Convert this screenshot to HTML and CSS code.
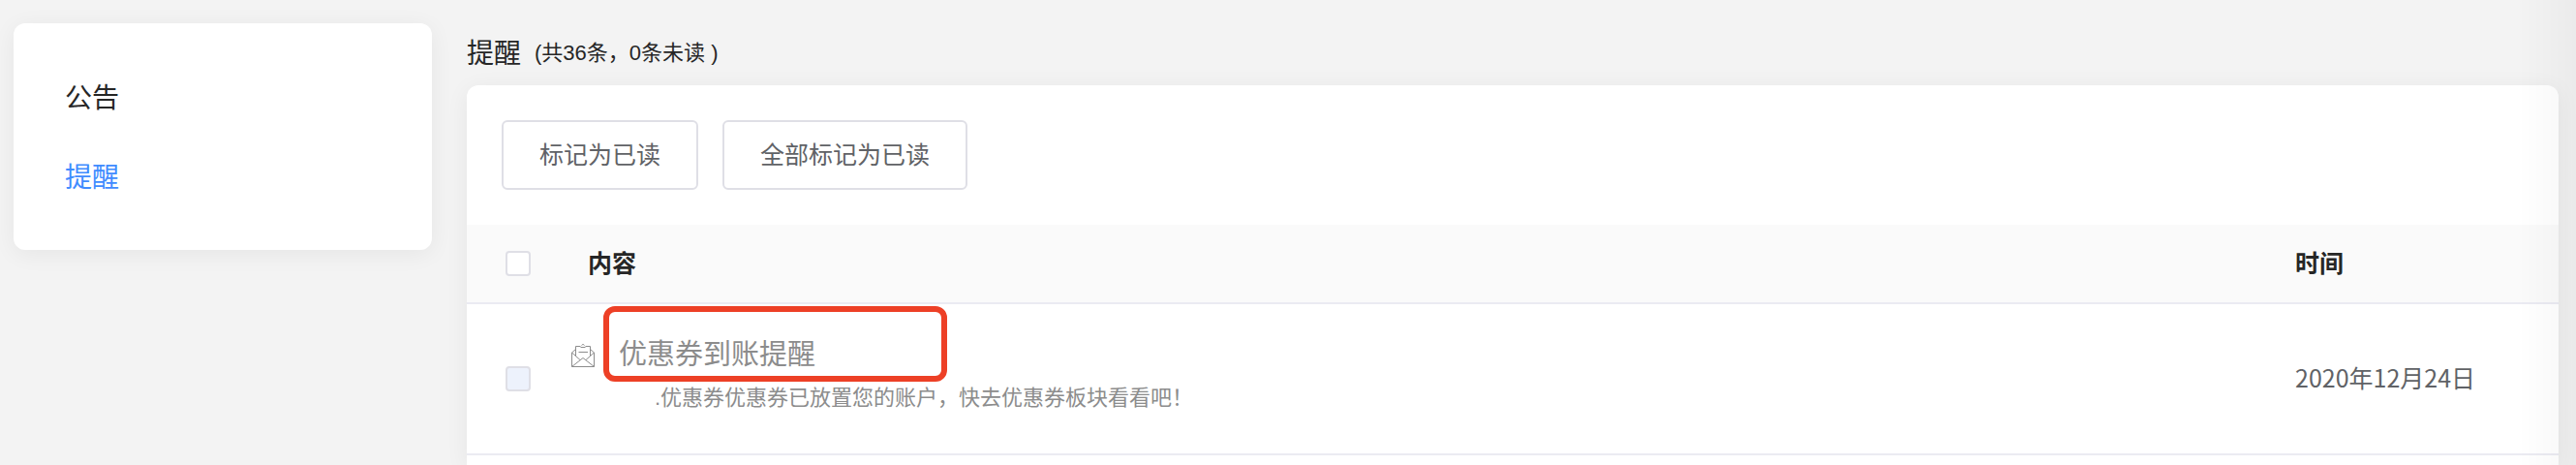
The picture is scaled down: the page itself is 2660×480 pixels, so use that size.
FILE: index.html
```html
<!DOCTYPE html>
<html lang="zh-CN">
<head>
    <meta charset="UTF-8">
    <meta name="viewport" content="width=device-width, initial-scale=1.0">
    <title>提醒</title>
    <link rel="stylesheet" href="styles.css">
</head>
<body>
    <div class="page">
        <nav class="sidebar">
            <a class="sidebar-link" href="#notice">公告</a>
            <a class="sidebar-link active" href="#remind">提醒</a>
        </nav>
        <main class="content">
            <header class="content-header">
                <h1 class="title">提醒</h1>
                <span class="count">(共36条，0条未读 )</span>
            </header>
            <section class="panel">
                <div class="toolbar">
                    <button class="btn" type="button">标记为已读</button>
                    <button class="btn" type="button">全部标记为已读</button>
                </div>
                <table class="message-table">
                    <thead>
                        <tr>
                            <th class="col-check"><input class="checkbox" type="checkbox" aria-label="全选"></th>
                            <th class="col-content">内容</th>
                            <th class="col-time">时间</th>
                        </tr>
                    </thead>
                    <tbody>
                        <tr>
                            <td class="col-check"><input class="checkbox" type="checkbox" aria-label="选择" disabled></td>
                            <td class="col-message">
                                <div class="message-head">
                                    <svg class="mail-icon" viewBox="0 0 24 24" fill="none" stroke="#8c8c8c">
                                        <path d="M4.5 12V2.5H9.5M14.5 2.5H19.5V12"/>
                                        <path d="M9.5 3.5H14.5M10.5 1.5C11 .3 13 .3 13.5 1.5"/>
                                        <path d="M7.5 8.5H17"/>
                                        <path d="M4.5 5.5L.5 9V23.5H23.5V9L19.5 5.5"/>
                                        <path d="M.5 9L9 16.5M23.5 9L15 16.5M.5 23.5L12 14.5L23.5 23.5"/>
                                    </svg>
                                    <span class="message-title">优惠券到账提醒</span>
                                </div>
                                <p class="message-text">.优惠券优惠券已放置您的账户，快去优惠券板块看看吧！</p>
                            </td>
                            <td class="col-time">2020年12月24日</td>
                        </tr>
                    </tbody>
                </table>
            </section>
        </main>
    </div>
</body>
</html>
```

FILE: styles.css
```css
* {
    box-sizing: border-box;
}
body {
    margin: 0;
    background-color: #f3f3f3;
    color: #262626;
    font-family: "Liberation Sans", "Noto Sans CJK SC", sans-serif;
    font-size: 25px;
}
/* soft shade along the right edge of the window */
body::after {
    content: "";
    position: fixed;
    top: 0;
    right: 0;
    bottom: 0;
    width: 60px;
    background: linear-gradient(to right, rgba(0, 0, 0, 0), rgba(0, 0, 0, 0.03));
    pointer-events: none;
}
.page {
    display: flex;
    gap: 36px;
    min-height: 100vh;
    padding: 24px 18px 0 14px;
}
.sidebar {
    display: flex;
    flex-direction: column;
    align-self: flex-start;
    gap: 42px;
    flex: 0 0 432px;
    padding: 58px 53px 54px;
    background-color: #fff;
    border-radius: 12px;
    box-shadow: 0 4px 24px rgba(0, 0, 0, 0.06);
}
.sidebar-link {
    color: #262626;
    font-size: 28px;
    line-height: 40px;
    text-decoration: none;
}
.sidebar-link.active {
    color: #3f8cff;
}
.content {
    display: flex;
    flex-direction: column;
    flex: 1;
    min-width: 0;
}
.content-header {
    display: flex;
    align-items: flex-start;
    gap: 14px;
    height: 64px;
    padding-top: 10px;
}
.title {
    margin: 0;
    font-size: 28px;
    font-weight: 400;
    line-height: 44px;
}
.count {
    font-size: 22px;
    line-height: 42px;
}
.panel {
    flex: 1;
    background-color: #fff;
    border-radius: 12px 12px 0 0;
    box-shadow: 0 4px 24px rgba(0, 0, 0, 0.06);
}
.toolbar {
    display: flex;
    gap: 25px;
    padding: 36px;
}
.btn {
    height: 72px;
    padding: 0 37px 4px;
    border: 2px solid #dfdfe6;
    border-radius: 6px;
    background-color: #fff;
    color: #606266;
    font-family: inherit;
    font-size: 25px;
    cursor: pointer;
}
.message-table {
    width: 100%;
    border-collapse: separate;
    border-spacing: 0;
    table-layout: fixed;
}
.message-table th,
.message-table td {
    padding: 0;
    border-bottom: 2px solid #ebebf2;
    text-align: left;
}
.message-table th {
    height: 82px;
    background-color: #fafafa;
}
.message-table td {
    height: 156px;
    color: #606266;
}
.message-table .col-check {
    width: 108px;
    padding-left: 40px;
}
.message-table .col-content {
    padding: 0 0 5px 17px;
}
.message-table .col-time {
    width: 272px;
    padding-bottom: 5px;
    font-family: "Noto Sans CJK SC", sans-serif;
}
.checkbox {
    display: block;
    width: 26px;
    height: 26px;
    margin: 0;
    appearance: none;
    border: 2px solid #dfdfe6;
    border-radius: 4px;
    background-color: #fff;
}
.checkbox:disabled {
    background-color: #edf2fc;
}
.message-table .col-message {
    vertical-align: top;
    padding-top: 2px;
    color: #8c8c8c;
}
.message-head {
    display: flex;
    align-items: center;
    gap: 9px;
}
.mail-icon {
    width: 24px;
    height: 24px;
    margin-top: 24px;
}
.message-title {
    width: 355px;
    height: 78px;
    padding: 20px 10px 0;
    border: 6px solid #ed4026;
    border-radius: 12px;
    font-size: 29px;
    line-height: 48px;
}
.message-text {
    margin: 0;
    padding-left: 86px;
    font-size: 22px;
    line-height: 34px;
}
```
